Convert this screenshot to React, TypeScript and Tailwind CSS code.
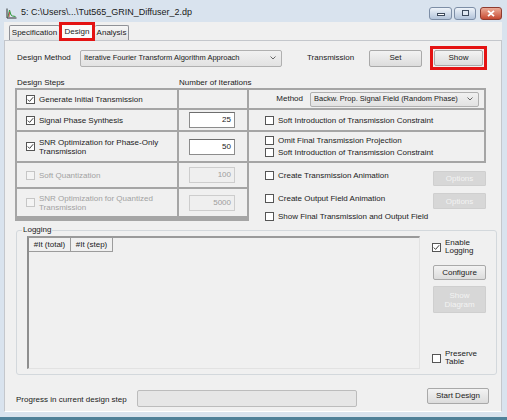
import type { ReactNode } from 'react';

// Win7-style dialog: "Design" tab of the IFTA design tool

function Check({ checked = false, disabled = false }: { checked?: boolean; disabled?: boolean }) {
  return (
    <span
      className={
        disabled
          ? 'flex h-[9px] w-[9px] shrink-0 items-center justify-center border border-[#c6c6c6] bg-[#f4f4f4]'
          : 'flex h-[9px] w-[9px] shrink-0 items-center justify-center border border-[#555] bg-white'
      }
    >
      {checked && (
        <svg width="7" height="7" viewBox="0 0 7 7">
          <polyline points="0.8,3.6 2.6,5.4 6.2,1.2" fill="none" stroke="#3a3a3a" strokeWidth="1" />
        </svg>
      )}
    </span>
  );
}

function CheckRow({ children, checked, disabled }: { children: ReactNode; checked?: boolean; disabled?: boolean }) {
  return (
    <div className="flex items-center gap-[4px]">
      <Check checked={checked} disabled={disabled} />
      <span className={disabled ? 'leading-[9px] text-[#a2a2a2]' : 'leading-[9px]'}>{children}</span>
    </div>
  );
}

function Button({ children, className = '' }: { children: ReactNode; className?: string }) {
  return (
    <div
      className={`flex items-center justify-center rounded-[2px] border border-[#a9a9a9] bg-gradient-to-b from-[#f3f3f3] to-[#dcdcdc] ${className}`}
    >
      {children}
    </div>
  );
}

function DisabledButton({ children, className = '' }: { children: ReactNode; className?: string }) {
  return (
    <div
      className={`flex flex-col items-center justify-center rounded-[1px] border border-[#cfcfcf] bg-[#d7d7d7] leading-[9px] text-[#f3f3f3] ${className}`}
    >
      {children}
    </div>
  );
}

function Combo({ text, className = '' }: { text: string; className?: string }) {
  return (
    <div
      className={`flex items-center rounded-[2px] border border-[#b0b0b0] bg-gradient-to-b from-[#f1f1f1] to-[#e2e2e2] pl-[3px] pr-[5px] ${className}`}
    >
      <span className="flex-1 overflow-hidden whitespace-nowrap text-[7.5px]">{text}</span>
      <svg width="6" height="4" viewBox="0 0 6 4">
        <polyline points="0.5,0.5 3,3 5.5,0.5" fill="none" stroke="#666" strokeWidth="1" />
      </svg>
    </div>
  );
}

function NumBox({ value, disabled = false }: { value: string; disabled?: boolean }) {
  return (
    <div
      className={
        disabled
          ? 'flex h-[16px] w-[46px] items-center justify-end border border-[#cdcdcd] bg-[#efefef] pr-[3px] text-[#9d9d9d]'
          : 'flex h-[16px] w-[46px] items-center justify-end border border-[#8c8c8c] border-t-[#6e6e6e] bg-white pr-[3px]'
      }
    >
      {value}
    </div>
  );
}

function TitleBar() {
  return (
    <div className="flex h-[22px] items-center pl-[6px] pr-[5px] pt-[4px]">
      <svg width="11" height="11" viewBox="0 0 11 11">
        <polyline points="1,0.5 1,10 10.5,10" fill="none" stroke="#333" strokeWidth="1" />
        <polyline points="2,9 3.5,2 5,7 6.5,8 9.5,8.5" fill="none" stroke="#2e9a3a" strokeWidth="1" />
        <polyline points="3,9 3.5,4" fill="none" stroke="#d03030" strokeWidth="0.8" />
      </svg>
      <span className="ml-[4px] text-[9px] text-[#1a1a1a]">5: C:\Users\...\Tut565_GRIN_Diffuser_2.dp</span>
      <div className="ml-auto flex items-center">
        <div className="flex h-[13px] w-[23px] items-center justify-center rounded-[3px] border border-[#7d8ea6] bg-gradient-to-b from-[#eef3f9] to-[#b3c4da] pt-[3px]">
          <span className="h-[3px] w-[8px] border border-[#3d4a5c] bg-white" />
        </div>
        <div className="ml-[2px] flex h-[13px] w-[22px] items-center justify-center rounded-[3px] border border-[#7d8ea6] bg-gradient-to-b from-[#eef3f9] to-[#b3c4da]">
          <span className="h-[6px] w-[7px] border border-[#3d4a5c] bg-[#dfe7f1]" />
        </div>
        <div className="ml-[4px] flex h-[13px] w-[22px] items-center justify-center rounded-[3px] border border-[#8e3b2f] bg-gradient-to-b from-[#ebab98] to-[#c5472f]">
          <svg width="8" height="7" viewBox="0 0 8 7">
            <path d="M1 0.8 L7 6.2 M7 0.8 L1 6.2" stroke="#fff" strokeWidth="1.8" />
          </svg>
        </div>
      </div>
    </div>
  );
}

function Tabs() {
  return (
    <div className="flex h-[18px] items-end pl-[5px]">
      <div className="flex h-[15px] w-[51px] items-center justify-center rounded-t-[2px] border border-b-0 border-[#8f9197] bg-gradient-to-b from-[#f6f6f6] to-[#e3e3e3]">
        Specification
      </div>
      <div className="relative z-10 -mb-[1px] -ml-[1px] flex h-[19px] w-[36px] items-center justify-center border-[3px] border-[#e41313] bg-[#fbfbfb]">
        Design
      </div>
      <div className="flex h-[15px] w-[34px] items-center justify-center rounded-t-[2px] border border-b-0 border-l-0 border-[#8f9197] bg-gradient-to-b from-[#f6f6f6] to-[#e3e3e3]">
        Analysis
      </div>
    </div>
  );
}

function DesignSteps() {
  return (
    <div className="ml-[10px] flex">
      {/* left block: step names + iterations */}
      <div className="grid w-[234px] grid-cols-[160px_68px] grid-rows-[18px_20px_29px_24px_27px] gap-[2px] bg-[#a5a5a5] p-[2px]">
        <div className="flex items-center bg-[#f0f0f0] pl-[9px]">
          <CheckRow checked>Generate Initial Transmission</CheckRow>
        </div>
        <div className="bg-[#f0f0f0]" />
        <div className="flex items-center bg-[#f0f0f0] pl-[9px]">
          <CheckRow checked>Signal Phase Synthesis</CheckRow>
        </div>
        <div className="flex items-center bg-[#f0f0f0] pl-[10px]">
          <NumBox value="25" />
        </div>
        <div className="flex items-center bg-[#f0f0f0] pl-[9px]">
          <CheckRow checked>
            SNR Optimization for Phase-Only
            <br />
            Transmission
          </CheckRow>
        </div>
        <div className="flex items-center bg-[#f0f0f0] pl-[10px]">
          <NumBox value="50" />
        </div>
        <div className="flex items-center bg-[#f0f0f0] pl-[9px]">
          <CheckRow disabled>Soft Quantization</CheckRow>
        </div>
        <div className="flex items-center bg-[#f0f0f0] pl-[10px]">
          <NumBox value="100" disabled />
        </div>
        <div className="flex items-center bg-[#f0f0f0] pl-[9px]">
          <CheckRow disabled>
            SNR Optimization for Quantized
            <br />
            Transmission
          </CheckRow>
        </div>
        <div className="flex items-center bg-[#f0f0f0] pl-[10px]">
          <NumBox value="5000" disabled />
        </div>
      </div>

      {/* right block: options per step */}
      <div className="flex w-[237px] flex-col">
        <div className="flex flex-col gap-[2px] bg-[#a5a5a5] py-[2px] pr-[2px]">
          <div className="flex h-[18px] items-center justify-end gap-[7px] bg-[#f0f0f0] pr-[5px]">
            <span>Method</span>
            <Combo text="Backw. Prop. Signal Field (Random Phase)" className="h-[15px] w-[169px]" />
          </div>
          <div className="flex h-[20px] items-center bg-[#f0f0f0] pl-[16px]">
            <CheckRow>Soft Introduction of Transmission Constraint</CheckRow>
          </div>
          <div className="flex h-[29px] flex-col justify-center gap-[3px] bg-[#f0f0f0] pl-[16px]">
            <CheckRow>Omit Final Transmission Projection</CheckRow>
            <CheckRow>Soft Introduction of Transmission Constraint</CheckRow>
          </div>
        </div>
        <div className="flex flex-col pl-[16px]">
          <div className="mt-[8px] flex h-[15px] items-start">
            <CheckRow>Create Transmission Animation</CheckRow>
            <DisabledButton className="ml-auto h-[15px] w-[53px]">Options</DisabledButton>
          </div>
          <div className="mt-[7px] flex h-[16px] items-start">
            <div className="mt-[1px]">
              <CheckRow>Create Output Field Animation</CheckRow>
            </div>
            <DisabledButton className="ml-auto h-[16px] w-[53px]">Options</DisabledButton>
          </div>
          <div className="mt-[3px]">
            <CheckRow>Show Final Transmission and Output Field</CheckRow>
          </div>
        </div>
      </div>
    </div>
  );
}

function Logging() {
  return (
    <fieldset className="ml-[11px] mt-[4px] h-[150px] w-[481px] rounded-[3px] border border-[#d3d8dc]">
      <legend className="ml-[5px] px-[1px] leading-[10px]">Logging</legend>
      <div className="flex pl-[10px] pt-[1px]">
        <div className="flex h-[133px] w-[393px] flex-col border-b border-l-2 border-r border-t-2 border-b-[#e2e2e2] border-l-[#8e8e8e] border-r-[#e2e2e2] border-t-[#9a9a9a]">
          <div className="flex h-[14px]">
            <div className="flex w-[42px] items-center justify-center border-b border-r border-[#9c9c9c]">#It (total)</div>
            <div className="flex w-[42px] items-center justify-center border-b border-r border-[#9c9c9c]">#It (step)</div>
          </div>
        </div>
        <div className="ml-[12px] flex h-[133px] w-[54px] flex-col">
          <div className="mt-[3px] flex items-center gap-[4px]">
            <Check checked />
            <span className="leading-[8px]">
              Enable
              <br />
              Logging
            </span>
          </div>
          <Button className="ml-[1px] mt-[10px] h-[15px] w-[53px]">Configure</Button>
          <DisabledButton className="ml-[1px] mt-[6px] h-[27px] w-[53px]">
            <span>Show</span>
            <span>Diagram</span>
          </DisabledButton>
          <div className="mb-[3px] mt-auto flex items-center gap-[4px]">
            <Check />
            <span className="leading-[8px]">
              Preserve
              <br />
              Table
            </span>
          </div>
        </div>
      </div>
    </fieldset>
  );
}

export default function App() {
  return (
    <div className="flex h-[420px] w-[507px] flex-col overflow-hidden bg-[#d9e3ee] font-['Liberation_Sans',Arial,sans-serif] text-[8px] text-[#1b1b1b]">
      <TitleBar />
      <div className="flex flex-1 flex-col pl-[4px] pr-[5px]">
        <div className="flex flex-1 flex-col bg-[#f0f0f0]">
          <Tabs />
          <div className="flex flex-1 flex-col border border-[#c4c7cc] border-b-white bg-[#f0f0f0]">
            {/* design method row */}
            <div className="mt-[5px] flex h-[24px] items-center pl-[12px]">
              <span className="w-[63px]">Design Method</span>
              <Combo text="Iterative Fourier Transform Algorithm Approach" className="h-[17px] w-[202px]" />
              <span className="ml-[25px] w-[62px]">Transmission</span>
              <Button className="h-[17px] w-[53px]">Set</Button>
              <div className="ml-[8px] flex h-[24px] w-[57px] items-center justify-center border-[3px] border-[#e41313] p-[1px]">
                <Button className="h-full w-full">Show</Button>
              </div>
            </div>

            <div className="mt-[7px] flex h-[11px] items-center pl-[12px]">
              <span className="w-[162px]">Design Steps</span>
              <span>Number of Iterations</span>
            </div>

            <DesignSteps />
            <Logging />

            <div className="mt-[13px] flex items-start pl-[11px]">
              <span className="mt-[7px] w-[121px] leading-[9px]">Progress in current design step</span>
              <div className="mt-[2px] h-[17px] w-[220px] rounded-[2px] border border-[#bcbcbc] bg-[#e6e6e6]" />
              <Button className="ml-[70px] h-[16px] w-[62px]">Start Design</Button>
            </div>
          </div>
        </div>
      </div>
      <div className="h-[8px] border-b-[3px] border-[#4f8199]" />
    </div>
  );
}
